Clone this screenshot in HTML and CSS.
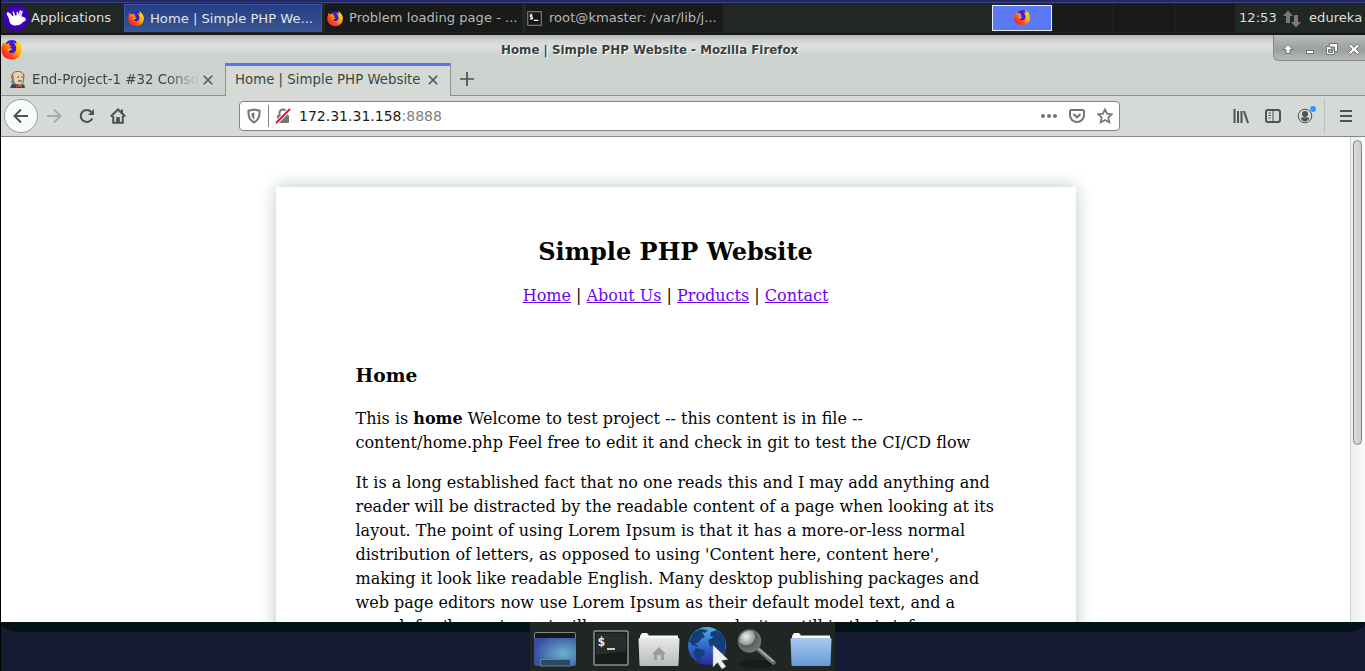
FILE: index.html
```
<!DOCTYPE html>
<html lang="en">
<head>
<meta charset="utf-8">
<title>Home | Simple PHP Website</title>
<link rel="stylesheet" href="styles.css">
</head>
<body>
<svg class="defs" width="0" height="0">
  <defs>
    <linearGradient id="fox" x1="1" y1="0" x2="0" y2="1"><stop offset="0" stop-color="#ffee20"/><stop offset=".4" stop-color="#ffae08"/><stop offset=".65" stop-color="#ff4a12"/><stop offset="1" stop-color="#f4004c"/></linearGradient>
    <linearGradient id="grayFolder" x1="0" y1="0" x2="0" y2="1"><stop offset="0" stop-color="#e8e9e7"/><stop offset="1" stop-color="#b7bbb9"/></linearGradient>
    <linearGradient id="blueFolder" x1="0" y1="0" x2="0" y2="1"><stop offset="0" stop-color="#a9caec"/><stop offset="1" stop-color="#6799d6"/></linearGradient>
    <radialGradient id="desk" cx=".7" cy=".55" r=".7"><stop offset="0" stop-color="#6bb4cd"/><stop offset="1" stop-color="#384ea0"/></radialGradient>
    <linearGradient id="sea" x1="0" y1="0" x2="0" y2="1"><stop offset="0" stop-color="#4fb5e0"/><stop offset=".5" stop-color="#2c6bcd"/><stop offset="1" stop-color="#2c27a2"/></linearGradient>
    <radialGradient id="lens" cx=".35" cy=".3" r=".75"><stop offset="0" stop-color="#eeeeee"/><stop offset=".5" stop-color="#969896"/><stop offset=".55" stop-color="#5b5d5c"/><stop offset="1" stop-color="#777978"/></radialGradient>
    <symbol id="firefox" viewBox="0 0 20 20">
      <circle cx="10.500" cy="8.500" r="7.500" fill="#3d19d8"/>
      <path d="M1.800 2.500 L3.500 5 Q5 3.600 6.500 4.600 L8 3.400 L7.700 6 L10 7 L8 8.700 L7 10 Q7.500 13.500 10.500 13.500 Q14 13.200 14.500 9.500 Q14.500 5.500 11.500 3 Q13.500 3.200 14.800 5 L14 1 Q20 4 19.800 11 Q19 19.500 10 19.800 Q1 19 .3 11 Q.2 7 1.500 5Z" fill="url(#fox)"/>
      <path d="M6 9.500 Q8.500 8.200 11 9.400 L9 10.700 Q7.500 11 7 12Z" fill="#ffb515"/>
    </symbol>
  </defs>
</svg>
<div class="screen">
  <div class="strip"></div>
  <div class="panel">
    <div class="apps">
      <svg class="mouse" viewBox="0 0 26 26"><circle cx="13" cy="13" r="13" fill="#3c00b8"/><path d="M4.300 10.500Q3 7.300 5 7.200 7.300 7.400 9.300 11Q15 9.500 18.500 11.500 22 11.700 23 14.500 22.500 16 20 17 17 21 11 20.500 6.500 19.500 6.300 15.500 6 13 4.300 10.500Z" fill="#fff"/><path d="M11.500 11 10.200 7.200M14.500 11 14.300 7.500M17.500 11.500 19 6.500M15.800 10.500 17.300 6" stroke="#fff" stroke-width="1.500" stroke-linecap="round"/></svg>
      <span>Applications</span>
    </div>
    <div class="task active"><svg class="fx16"><use href="#firefox"/></svg><span>Home | Simple PHP We...</span></div>
    <div class="task"><svg class="fx16"><use href="#firefox"/></svg><span>Problem loading page - ...</span></div>
    <div class="task term"><svg class="termicon" viewBox="0 0 16 16"><rect x=".8" y=".8" width="14.400" height="14.400" fill="#151818" stroke="#949694"/><path d="M6 4.200H3.600V6L5.800 6.500V8.300H3M4.600 3V9.400M7.500 10H12" fill="none" stroke="#fff" stroke-width="1.200"/></svg><span>root@kmaster: /var/lib/j...</span></div>
    <div class="pager">
      <div class="cell current"><svg class="fx16"><use href="#firefox"/></svg></div><div class="cell"></div><div class="cell"></div><div class="cell"></div>
    </div>
    <div class="clock">12:53</div>
    <svg class="net" viewBox="0 0 18 18"><path d="M5 .5 L10 6H7V13H3V6H0ZM11 5H15V12H18L13 17.500 8 12H11Z" fill="#777a78"/></svg>
    <div class="user">edureka</div>
  </div>

  <div class="window">
    <div class="titlebar">
      <svg class="fx20"><use href="#firefox"/></svg>
      <div class="title">Home | Simple PHP Website - Mozilla Firefox</div>
      <div class="controls">
        <svg viewBox="0 0 92 26" fill="#fff" stroke="#6d706e" stroke-width="1">
          <path d="M15 9.500 L20 14.500H17V18.500H13V14.500H10Z"/>
          <rect x="33.500" y="15.500" width="7" height="3"/>
          <path fill-rule="evenodd" d="M56.500 8.500H64.500V16.500H61.500V19.500H53.500V11.500H56.500Z"/><path d="M56.500 12H61.500V16.500M55.500 14.500H59.500V17.500H55.500Z" fill="#a3a6a4"/>
          <path d="M75.500 11L77.500 9 81 12.300 84.500 9 86.500 11 83 14.200 86.500 17.500 84.500 19.500 81 16.200 77.500 19.500 75.500 17.500 79 14.200Z"/>
        </svg>
      </div>
    </div>

    <div class="tabs">
      <div class="tab">
        <svg class="jenkins" viewBox="0 0 16 17"><path d="M2 7Q1 1 7 .5 13 0 14 5L13 12 10 14 5 13Z" fill="#ead1aa" stroke="#5a483b" stroke-width=".8"/><path d="M2 8 Q.5 5 3 3 L4 7 3.500 10 6 13 3 14 1 11Z" fill="#817c75"/><path d="M7.500 6H9M11.500 6H13M8 10H12" stroke="#40352b" stroke-width="1"/><path d="M0 17 2 13 6 13.500 10 15 14 13 15 17Z" fill="#30475d"/><path d="M6 14 9 15 12 13.500V17L9 15.500 6 17Z" fill="#d7342a"/></svg>
        <span class="label fade">End-Project-1 #32 Conso</span>
        <svg class="close" viewBox="0 0 10 10"><path d="M.8.8 9.200 9.200M9.200.8.8 9.200"/></svg>
      </div>
      <div class="tab selected">
        <span class="label">Home | Simple PHP Website</span>
        <svg class="close" viewBox="0 0 10 10"><path d="M.8.8 9.200 9.200M9.200.8.8 9.200"/></svg>
      </div>
      <div class="newtab"><svg viewBox="0 0 14 14"><path d="M7 0V14M0 7H14" stroke="#4b504d" stroke-width="1.700"/></svg></div>
    </div>

    <div class="toolbar">
      <div class="back"><svg class="ic" viewBox="0 0 16 16"><path d="M15 8H1.500M8 1.500 1.500 8 8 14.500"/></svg></div>
      <svg class="ic forward" viewBox="0 0 16 16"><path d="M1 8H14.500M8 1.500 14.500 8 8 14.500"/></svg>
      <svg class="ic reload" viewBox="0 0 16 16"><path d="M13.200 10.500A6 6 0 1 1 12.300 4"/><path d="M15 1V7H9Z" class="solid"/></svg>
      <svg class="ic home" viewBox="0 0 16 16"><path d="M.8 8.500 8 1.500 15.200 8.500M3.200 8V14.800H12.800V8M12 1.500V5"/><path d="M6.200 15V9H9.800V15Z" class="solid"/></svg>
      <div class="urlbar">
        <svg class="ic u1" viewBox="0 0 16 16"><path d="M8 1.500Q11 2.500 13.500 2.600 14.200 11.500 8 14.500 1.800 11.500 2.500 2.600 5 2.500 8 1.500Z"/><path d="M8.300 4.500V11.700Q5.300 9.500 5.500 5.200Z" class="solid"/></svg>
        <i></i>
        <svg class="ic u2" viewBox="0 0 16 16"><path d="M4.500 8V5a3.500 3.500 0 0 1 7 0V8"/><rect x="2" y="7" width="12" height="8" rx="1.300" class="solid"/><path d="M1 15 15 1" stroke="#fff" stroke-width="4"/><path d="M1 15 15 1" stroke="#ff0039" stroke-width="2"/></svg>
        <span class="url">172.31.31.158<em>:8888</em></span>
        <svg class="ic dots" viewBox="0 0 16 16"><circle cx="2" cy="8" r="2"/><circle cx="8" cy="8" r="2"/><circle cx="14" cy="8" r="2"/></svg>
        <svg class="ic pocket" viewBox="0 0 16 16"><path d="M2.300 2H13.700Q15 2 15 3.300V7A7 7 0 0 1 1 7V3.300Q1 2 2.300 2ZM4.500 6 8 9.300 11.500 6"/></svg>
        <svg class="ic star" viewBox="0 0 16 16"><path d="M8 1.300 10 5.700 14.900 6.200 11.300 9.500 12.400 14.400 8 11.900 3.600 14.400 4.700 9.500 1.100 6.200 6 5.700Z"/></svg>
      </div>
      <svg class="ic library" viewBox="0 0 16 16"><path d="M1.500 1V15M5 3V15M8.500 3V15M11 3 15 15"/></svg>
      <svg class="ic sidebar" viewBox="0 0 16 16"><rect x="1" y="2" width="14" height="12" rx="2"/><path d="M8 2V14M3.500 5H6M3.500 7.500H6M3.500 10H5.500" stroke-width="1"/></svg>
      <div class="account"><svg class="ic" viewBox="0 0 16 16"><circle cx="8" cy="8" r="6.800" stroke-width="1"/><circle cx="8" cy="6" r="3" class="solid"/><path d="M3.700 10Q8 8.500 12.300 10 11 13.400 8 13.400T3.700 10Z" class="solid"/></svg><b></b></div>
      <div class="sep"></div>
      <svg class="ic menu" viewBox="0 0 16 16"><path d="M2 3H14M2 8H14M2 13H14"/></svg>
    </div>

    <div class="viewport">
      <div class="page">
        <h1>Simple PHP Website</h1>
        <nav><a>Home</a> | <a>About Us</a> | <a>Products</a> | <a>Contact</a></nav>
        <h2>Home</h2>
        <p>This is <strong>home</strong> Welcome to test project -- this content is in file -- content/home.php Feel free to edit it and check in git to test the CI/CD flow</p>
        <p>It is a long established fact that no one reads this and I may add anything and reader will be distracted by the readable content of a page when looking at its layout. The point of using Lorem Ipsum is that it has a more-or-less normal distribution of letters, as opposed to using 'Content here, content here', making it look like readable English. Many desktop publishing packages and web page editors now use Lorem Ipsum as their default model text, and a search for 'lorem ipsum' will uncover many web sites still in their infancy.</p>
      </div>
      <div class="scroll"><div class="thumb"></div></div>
    </div>
  </div>

  <div class="desktop">
    <div class="shadow"></div>
    <div class="dock">
      <svg viewBox="0 0 305 49">
        <path d="M4.500 37V11.500Q4.500 10.500 6 10.500H44Q45.500 10.500 45.500 11.500V37" fill="#151918" stroke="#858a88"/>
        <path d="M4 16H46V42Q46 44 44 44H6Q4 44 4 42Z" fill="url(#desk)"/><path d="M10.500 44V37.500H40.500V44Z" fill="#304764" stroke="#5288af"/>
        <rect x="64" y="9" width="34" height="34" rx="1" fill="#171b1a" stroke="#8a8e8c" stroke-width="1.500"/><path d="M66 11H96V29L66 33Z" fill="#282c2b"/>
        <text x="67.500" y="24" class="prompt">$</text><path d="M77 27H85" stroke="#e8eae8" stroke-width="1.700"/>
        <path d="M110 22V14L112 11H117L119 13.500H148V22Z" fill="#fafafa"/><path d="M108.500 17Q108.500 16 110 16H148Q149.500 16 149.500 17L148.500 43Q148.500 44 147 44H111Q109.500 44 109.500 43Z" fill="url(#grayFolder)"/><path d="M129 25 136 32H134V38H131V33H127V38H124V32H122Z" fill="#9b9f9c"/>
        <circle cx="177" cy="24" r="19" fill="url(#sea)"/>
        <path d="M159 19 163 11 170 7 178 8 175 11 172 10 175 15 171 17 168 21 165 21 169 25 162 23ZM166 26 174 28 175 32 171 36 169 43 166 36 163 31ZM181 10 187 8 192 12 195 18 195 29 191 32 187 27 180 24 178 18 184 15 180 14Z" fill="#153d79"/>
        <path d="M183 23V45L187.500 40.500 192 47 196 44.500 191.500 38.500 198 37.500Z" fill="#eef0f2" stroke="#8995a0" stroke-width=".5"/>
        <ellipse cx="227" cy="42" rx="18" ry="4" fill="#171c19"/>
        <path d="M227 26 243.500 40.500" stroke="#686c6a" stroke-width="4.500" stroke-linecap="round"/><path d="M227 25.500 243.500 39.500" stroke="#aeb1af" stroke-width="1.500"/>
        <circle cx="219.500" cy="19" r="11" fill="url(#lens)" stroke="#6e716f" stroke-width="1.500"/>
        <path d="M262 22V14L264 11H269L271 13.500H300V22Z" fill="#fafafa"/><path d="M260.500 17Q260.500 16 262 16H300Q301.500 16 301.500 17L300.500 43Q300.500 44 299 44H263Q261.500 44 261.500 43Z" fill="url(#blueFolder)"/>
      </svg>
    </div>
  </div>
</div>
</body>
</html>
```
FILE: styles.css
```
* { box-sizing: border-box; }
body { margin: 0; overflow: hidden; font-family: "DejaVu Sans", sans-serif; font-size: 13.12px; }
svg { display: block; flex: none; }
.defs { position: absolute; }
.screen { width: 1365px; height: 671px; display: flex; flex-direction: column; background: #141b33; overflow: hidden; border-left: 1px solid #000; }
.strip { height: 3px; flex: none; background: #24265e; border-bottom: 1px solid #3b4386; }

.panel { height: 32px; flex: none; display: flex; background: #202724; border-bottom: 2px solid #141817; color: #dcdfdd; align-items: center; white-space: nowrap; }
.apps { width: 123px; display: flex; align-items: center; gap: 2px; padding-left: 2px; }
.mouse { width: 26px; height: 26px; }
.apps span { margin-top: -2px; }
.task { width: 197px; height: 28px; margin-right: 4px; padding-left: 2px; display: flex; align-items: center; gap: 6px; background: #191b1a; color: #b5b8b6; }
.task span { margin-top: -2px; }
.task.active { width: 198px; margin-right: 3px; padding-left: 3px; background: linear-gradient(#263d83, #385592); border: 1px solid #3c58a5; color: #e0e4ec; }
.task.active span { margin-top: 0; }
.task.term { margin-right: 0; padding-left: 1px; gap: 7px; }
.termicon { width: 15px; height: 15px; }
.fx16 { width: 16px; height: 17px; }
.fx20 { width: 21px; height: 21px; }
.pager { display: flex; height: 28px; margin-left: auto; gap: 1px; }
.cell { width: 60px; background: #191919; }
.cell.current { border: 1px solid #e8ecf5; background: #5b78f5; height: 26px; margin-top: 1px; padding-bottom: 2px; display: flex; align-items: center; justify-content: center; }
.clock { width: 48px; padding-left: 4px; margin-top: -2px; }
.net { width: 18px; height: 18px; margin-top: 1px; }
.user { width: 56px; margin-left: 8px; margin-top: -2px; }

.window { height: 587px; flex: none; display: flex; flex-direction: column; background: #ccd2ce; overflow: hidden; }
.titlebar { height: 28px; flex: none; display: flex; background: linear-gradient(#b3b5b4, #d0d2d1 5px, #dcdddc 10px, #dbdddc 15px, #d1d6d3 17px, #ccd2ce 22px); padding-top: 4px; }
.title { flex: 1; padding-left: 479px; padding-top: 4px; font-weight: bold; font-size: 11.85px; color: #39423e; text-shadow: 1px 1px #fff; line-height: 14px; white-space: nowrap; }
.controls { width: 92px; height: 26px; margin-top: -4px; background: linear-gradient(#b9bbba, #9c9f9d 15px, #b8bbb9); border-left: 1px solid #868a88; border-bottom: 1px solid #868a88; border-bottom-left-radius: 6px; }
.controls svg { width: 92px; height: 26px; margin-left: -1px; }
.tabs { height: 33px; flex: none; display: flex; color: #3e4642; border-bottom: 1px solid #8c918e; }
.tab { width: 224px; padding-left: 9px; display: flex; align-items: center; }
.jenkins { width: 16px; height: 17px; margin-right: 6px; }
.label { font-size: 13.33px; white-space: nowrap; }
.fade { width: 166px; mask-image: linear-gradient(90deg, #000 135px, transparent 167px); }
.close { width: 10px; height: 10px; stroke: #505552; stroke-width: 1.600; margin-left: 5px; margin-top: 1px; }
.selected { width: 226px; height: 33px; background: #d5dad6; border: 1px solid #8c918e; border-top: 3px solid #5773f0; border-bottom: 0; padding-left: 9px; padding-bottom: 3px; }
.selected .close { margin-left: 7px; margin-top: 1px; }
.newtab { padding: 9px 0 0 9px; }
.newtab svg { width: 14px; height: 14px; }

.toolbar { height: 41px; flex: none; display: flex; align-items: center; background: #d5dad6; border-bottom: 1px solid #838785; padding-left: 3px; }
.ic { width: 16px; height: 16px; fill: none; stroke: #4e5350; stroke-width: 2; }
.ic .solid { fill: #4e5350; stroke: none; }
.back { width: 34px; height: 34px; border: 1px solid #999e9b; border-radius: 50%; background: #f8fcf9; display: flex; align-items: center; justify-content: center; }
.forward { margin-left: 8px; stroke: #a8ada9; }
.reload { margin-left: 17px; }
.home { margin-left: 15px; }
.urlbar { width: 881px; height: 30px; margin-left: 113px; background: #fff; border: 1px solid #7f8481; border-radius: 4px; display: flex; align-items: center; padding-left: 6px; }
.urlbar .ic { stroke: #747675; }
.urlbar .solid { fill: #747675; }
.urlbar i { width: 1px; height: 22px; background: #7d7f7e; margin: 0 6px; }
.url { margin-left: 8px; font-size: 14.03px; color: #191c1a; flex: 1; }
.url em { font-style: normal; color: #7e807f; }
.urlbar .dots { fill: #747675; stroke: none; margin-right: 12px; }
.urlbar .pocket { margin-right: 12px; }
.urlbar .star { margin-right: 6px; stroke-width: 1.700; }
.library { margin-left: 113px; }
.sidebar { margin-left: 16px; }
.account { position: relative; margin-left: 16px; }
.account b { position: absolute; width: 6px; height: 6px; right: -3px; top: -2px; border-radius: 50%; background: #329bff; }
.sep { width: 1px; height: 34px; background: #bdc1be; margin: 0 13px 0 11px; }

.viewport { height: 485px; flex: none; background: #fff; overflow: hidden; display: flex; }
.page { width: 800px; height: 700px; flex: none; margin: 50px 0 0 275px; padding: 47px 80.5px 0 79.5px; box-shadow: 0 0 17px #b9c8c8; color: #050505; font-family: "DejaVu Serif", serif; font-size: 16px; line-height: 24px; }
h1 { margin: 0; font-size: 24px; line-height: 36px; text-align: center; }
nav { margin-top: 14px; text-align: center; }
nav a { color: #6a05ee; text-decoration: underline; }
h2 { margin: 53px 0 18px; font-size: 18.72px; line-height: 28px; }
p { margin: 0 0 16px; }
.scroll { width: 15px; margin-left: auto; height: 485px; background: linear-gradient(90deg, #eceeed, #f9fcfa); border-left: 1px solid #d4d6d5; padding: 3px 2px 0; }
.thumb { width: 9px; height: 305px; border: 1px solid #828684; border-radius: 5px; background: linear-gradient(90deg, #d8dcda, #c9cecb); }

.desktop { height: 49px; flex: none; position: relative; }
.shadow { height: 10px; background: #011315; border-bottom: 1px solid #12082d; border-radius: 0 0 20px 20px / 0 0 9px 9px; }
.dock { position: absolute; left: 529px; top: 0; width: 305px; height: 49px; background: #202623; }
.dock svg { width: 305px; height: 49px; }
.prompt { font: bold 13px "DejaVu Sans Mono", monospace; fill: #f0f2f0; }
```
